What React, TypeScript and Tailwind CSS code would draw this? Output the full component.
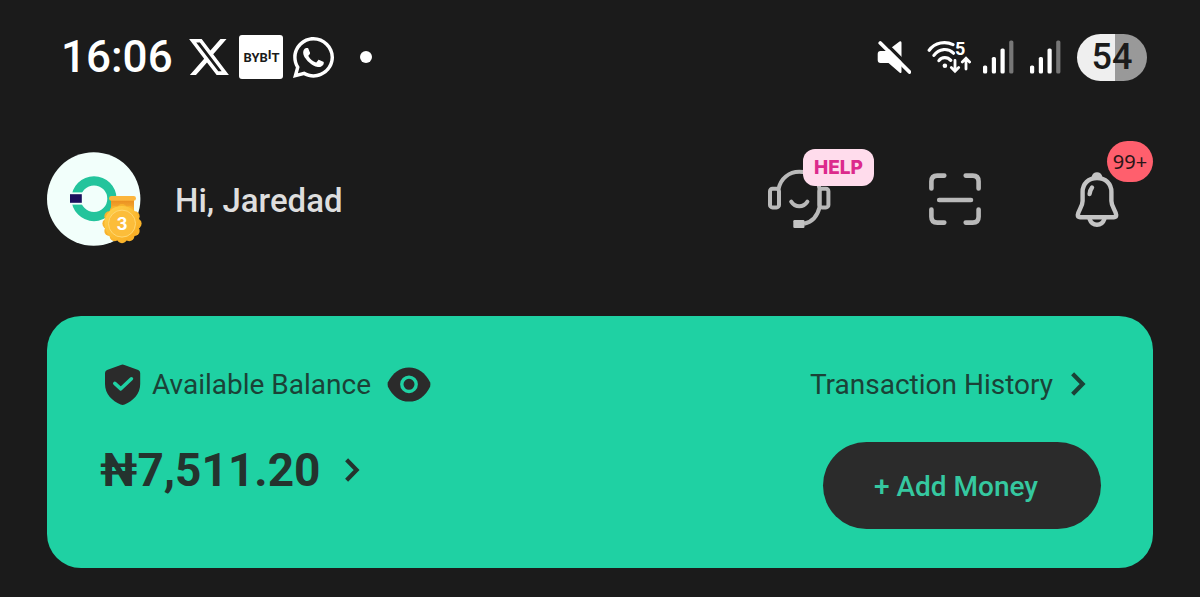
import React from "react";
import { FaWhatsapp } from "react-icons/fa";

const XLogo = () => (
  <svg viewBox="0 1.15 24 21.7" className="h-9 w-10" fill="#fff" aria-label="X">
    <path d="M18.901 1.153h3.68l-8.04 9.19L24 22.846h-7.406l-5.8-7.584-6.638 7.584H.474l8.6-9.83L0 1.154h7.594l5.243 6.932ZM17.61 20.644h2.039L6.486 3.24H4.298Z" />
  </svg>
);

const BybitLogo = () => (
  <svg viewBox="0 0 44 44" className="size-11 font-['Roboto',sans-serif] font-bold" aria-label="Bybit">
    <rect width="44" height="44" rx="3" fill="#fff" />
    <text x="4.5" y="27" fontSize="13" fill="#1b1b1b">
      BYB<tspan dy="-3">I</tspan><tspan dy="3">T</tspan>
    </text>
  </svg>
);

const MutedIcon = () => (
  <svg viewBox="0 0 34 34" className="size-[34px]" aria-label="Muted">
    <path d="M3.5 11H10L22.5 1.6Q24.5.4 24.5 2.8V31.5Q24.5 34 22.5 32.4L11.5 23H3.5Q.7 23 .7 20V14Q.7 11 3.5 11Z" fill="#fff" />
    <path d="M6 0.7 36 30.7" stroke="#1b1b1b" strokeWidth="3.4" />
    <path d="M3.3 3 32.5 32" stroke="#fff" strokeWidth="3.8" strokeLinecap="round" />
  </svg>
);

const WifiIcon = () => (
  <svg viewBox="0 -4 44 42" className="h-[42px] w-11 font-['Roboto',sans-serif] font-bold" fill="none" stroke="#fff" strokeWidth="3.2" strokeLinecap="round" aria-label="Wi-Fi">
    <path d="M2.2 10.2C8 2.2 18.5.8 26 4.6" />
    <path d="M6.9 15.4C12 8.2 21 7.8 26.5 13.2" />
    <path d="M11.9 20.6C14.8 16.6 20.5 16.6 23.8 20.4" />
    <circle cx="17.9" cy="25.7" r="2.3" fill="#fff" stroke="none" />
    <path d="M28 20.5V31M24.3 27.6 28 31.2 31.7 27.6" strokeWidth="2.8" />
    <path d="M39 29V18.5M35.3 22 39 18.3 42.6 22" strokeWidth="2.8" />
    <text x="28" y="15" fontSize="18" fill="#fff" stroke="none">5</text>
  </svg>
);

const SignalIcon = () => (
  <svg viewBox="0 0 31 34" className="h-[34px] w-[31px]" fill="#fff" aria-label="Signal">
    <rect x="0" y="25.5" width="4.2" height="8" rx="1.6" />
    <rect x="8.8" y="17" width="4.2" height="16.5" rx="1.6" />
    <rect x="17.5" y="8.5" width="4.2" height="25" rx="1.6" />
    <rect x="26.2" y="0.5" width="4.2" height="33" rx="1.6" fill="#777" />
  </svg>
);

const medalEdge = Array.from({ length: 12 }, (_, i) => {
  const a = (i * Math.PI) / 6;
  return { x: 75 + 14.6 * Math.cos(a), y: 71.6 + 14.6 * Math.sin(a) };
});

const Avatar = () => (
  <svg viewBox="0 0 98 94" className="h-[94px] w-[98px] shrink-0" aria-label="Profile">
    <defs>
      <linearGradient id="medal" x1="0" y1="0" x2="1" y2="1">
        <stop offset="0" stopColor="#ffd34f" />
        <stop offset="1" stopColor="#f8a81c" />
      </linearGradient>
      <linearGradient id="ribbon" x1="0" y1="0" x2="0" y2="1">
        <stop offset="0" stopColor="#e98a1c" />
        <stop offset="1" stopColor="#f9b83a" />
      </linearGradient>
    </defs>
    <circle cx="46.7" cy="47" r="46.7" fill="#f2fffb" />
    <circle cx="47" cy="46.7" r="17.9" fill="none" stroke="#23c49c" strokeWidth="9.2" />
    <rect x="21" y="40.4" width="15.4" height="12.2" fill="#f2fffb" />
    <rect x="23" y="42.2" width="11.8" height="8.6" fill="#1c0f5c" />
    <path d="M64 47H87V60H64Z" fill="url(#ribbon)" />
    <rect x="62" y="44" width="27" height="4.8" rx="2.4" fill="#fcb63c" />
    {medalEdge.map((p, i) => (
      <circle key={i} cx={p.x} cy={p.y} r="5" fill="#f9b32b" />
    ))}
    <circle cx="75" cy="71.6" r="17.6" fill="url(#medal)" />
    <circle cx="75" cy="71.6" r="13.5" fill="#fcbd3a" stroke="#ffd873" strokeWidth="1" />
    <text x="75" y="77.6" fontSize="17" textAnchor="middle" fill="#fff" className="font-['Inter',sans-serif] font-bold">3</text>
  </svg>
);

const HeadsetIcon = () => (
  <svg viewBox="0 0 67 60" className="h-[60px] w-[67px]" fill="none" stroke="#b9b9b9" strokeWidth="4" aria-hidden="true">
    <rect x="2" y="19.8" width="9" height="18.6" rx="2.5" />
    <rect x="51.4" y="19.8" width="9" height="18.6" rx="2.5" />
    <path d="M10.6 20C12.5 9.5 21 2.8 31.3 2.8S50 9.5 51.6 20V38C49.5 47 44 53 36 54.8" />
    <rect x="25.3" y="51" width="11.2" height="8" rx="1.2" fill="#c4c4c4" stroke="none" />
    <path d="M23.2 32.6C27.3 38.8 35.3 38.8 39.4 32.6" strokeLinecap="round" />
  </svg>
);

const ScanIcon = () => (
  <svg viewBox="0 0 52 52" className="size-[52px]" fill="none" stroke="#b9b9b9" strokeWidth="4.6" strokeLinecap="round" aria-hidden="true">
    <path d="M2.4 15.5V8.5Q2.4 2.6 8.3 2.6H15.3M36.7 2.6H43.7Q49.6 2.6 49.6 8.5V15.5M49.6 36.5V43.7Q49.6 49.6 43.7 49.6H36.7M15.3 49.6H8.3Q2.4 49.6 2.4 43.7V36.5M10.2 27H42" />
  </svg>
);

const BellIcon = () => (
  <svg viewBox="0 0 44 56" className="h-14 w-11" fill="none" stroke="#c4c4c4" strokeWidth="4.4" strokeLinecap="round" strokeLinejoin="round" aria-hidden="true">
    <path d="M16.6 6Q17.5 1.2 22 1.2T27.4 6Z" fill="#c4c4c4" stroke="none" />
    <path d="M22 7C13.5 7 7.6 12.8 7.6 21V30C7.6 36 3.2 39.5 2.8 44Q2.8 46.2 5 46.2H39Q41.2 46.2 41.2 44C40.8 39.5 36.4 36 36.4 30V21C36.4 12.8 30.5 7 22 7Z" />
    <path d="M14.6 23Q14.8 19.4 17 16.6" />
    <path d="M14.6 48C16 52 18.6 53.8 22 53.8S28 52 29.4 48" />
  </svg>
);

const ShieldIcon = () => (
  <svg viewBox="0 0 36 41" className="h-[41px] w-9 shrink-0" aria-hidden="true">
    <path d="M15.8.9Q17.6.2 19.4.9L33.2 6Q35.2 6.9 35.2 9V20C35.2 30 28 37 19.6 40.5Q17.6 41.3 15.6 40.5C7.2 37 0 30 0 20V9Q0 6.9 2 6Z" fill="#2b2b2b" />
    <path d="M9.8 19.4 15.8 24.8 26.4 14.8" fill="none" stroke="#1fd1a3" strokeWidth="3.6" strokeLinecap="round" strokeLinejoin="round" />
  </svg>
);

const EyeIcon = () => (
  <svg viewBox="0 0 44 35" className="h-[35px] w-11" aria-hidden="true">
    <path d="M.9 15.3C5.5 6 12.7.4 22 .4S38.5 6 43.1 15.3Q44 17.5 43.1 19.7C38.5 29 31.3 34.6 22 34.6S5.5 29 .9 19.7Q0 17.5 .9 15.3Z" fill="#2b2b2b" />
    <circle cx="22" cy="17.3" r="7.2" fill="none" stroke="#1fd1a3" strokeWidth="3.4" />
  </svg>
);

const Chevron = () => (
  <svg viewBox="0 0 15 24" className="h-6 w-[15px]" fill="none" stroke="currentColor" strokeWidth="4.2" aria-hidden="true">
    <path d="M1.6 1.8 11.6 12 1.6 22.2" />
  </svg>
);

export default function App() {
  return (
    <div className="min-h-screen bg-[#1b1b1b] px-[47px] pt-[33px] pb-7 font-['Roboto',sans-serif]">
      <div className="flex h-12 items-center justify-between pr-[6px] pl-[14px] text-white">
        <div className="flex items-center">
          <time className="text-[44px] leading-none font-medium">16:06</time>
          <div className="ml-4 flex items-center gap-[10px]">
            <XLogo />
            <BybitLogo />
            <FaWhatsapp className="h-[47px] w-[41px]" aria-label="WhatsApp" />
          </div>
          <span className="ml-[26px] size-3 rounded-full bg-white" />
        </div>
        <div className="flex items-center gap-4">
          <MutedIcon />
          <div className="flex items-center gap-3">
            <WifiIcon />
            <SignalIcon />
          </div>
          <SignalIcon />
          <div className="flex h-[47px] w-[70px] items-center justify-center rounded-full bg-linear-to-r from-[#efefef] from-54% to-[#999] to-54% text-[36px] leading-none font-medium text-[#1b1b1b]">
            54
          </div>
        </div>
      </div>

      <header className="mt-[71px] flex h-[94px] items-center justify-between pr-[34px]">
        <div className="flex items-center gap-[30px]">
          <Avatar />
          <h1 className="pt-1 text-[33px] leading-10 font-medium text-[#dedede]">Hi, Jaredad</h1>
        </div>
        <div className="flex items-center gap-[94px]">
          <button type="button" className="relative" aria-label="Help">
            <HeadsetIcon />
            <span className="absolute -top-5 left-[35px] flex h-[37px] w-[71px] items-center justify-center rounded-xl bg-[#ffdcec] font-['Inter',sans-serif] text-[19px] leading-none font-extrabold text-[#dc2a8c]">
              HELP
            </span>
          </button>
          <button type="button" aria-label="Scan">
            <ScanIcon />
          </button>
          <button type="button" className="relative" aria-label="Notifications">
            <BellIcon />
            <span className="absolute -top-[30px] left-8 flex h-[41px] w-[46px] items-center justify-center rounded-full bg-[#ff5f6d] font-['Noto_Sans',sans-serif] text-xl leading-none text-[#2a1618]">
              99+
            </span>
          </button>
        </div>
      </header>

      <main className="mt-[70px] flex justify-between rounded-[34px] bg-[#1fd1a3] pt-12 pr-[52px] pb-[39px] pl-[53px] text-[#24332e]">
        <section>
          <div className="flex h-10 items-center pl-[5px]">
            <ShieldIcon />
            <span className="ml-[11px] pt-[2px] text-[28px] leading-10 text-[#1b4237]">Available Balance</span>
            <button type="button" className="ml-4" aria-label="Hide balance">
              <EyeIcon />
            </button>
          </div>
          <button type="button" className="mt-[38px] flex h-14 items-center gap-[25px] text-[46px] leading-none font-bold">
            ₦7,511.20
            <Chevron />
          </button>
        </section>
        <section className="flex flex-col items-end">
          <a href="#history" className="flex h-10 items-center gap-[18px] pr-[15px] text-[28px] leading-10 text-[#1b4237]">
            <span className="pt-[2px]">Transaction History</span>
            <Chevron />
          </a>
          <button type="button" className="mt-[38px] h-[87px] w-[278px] rounded-full bg-[#2b2b2b] pt-[2px] pr-3 text-[28px] font-medium text-[#35c8a0]">
            + Add Money
          </button>
        </section>
      </main>
    </div>
  );
}
